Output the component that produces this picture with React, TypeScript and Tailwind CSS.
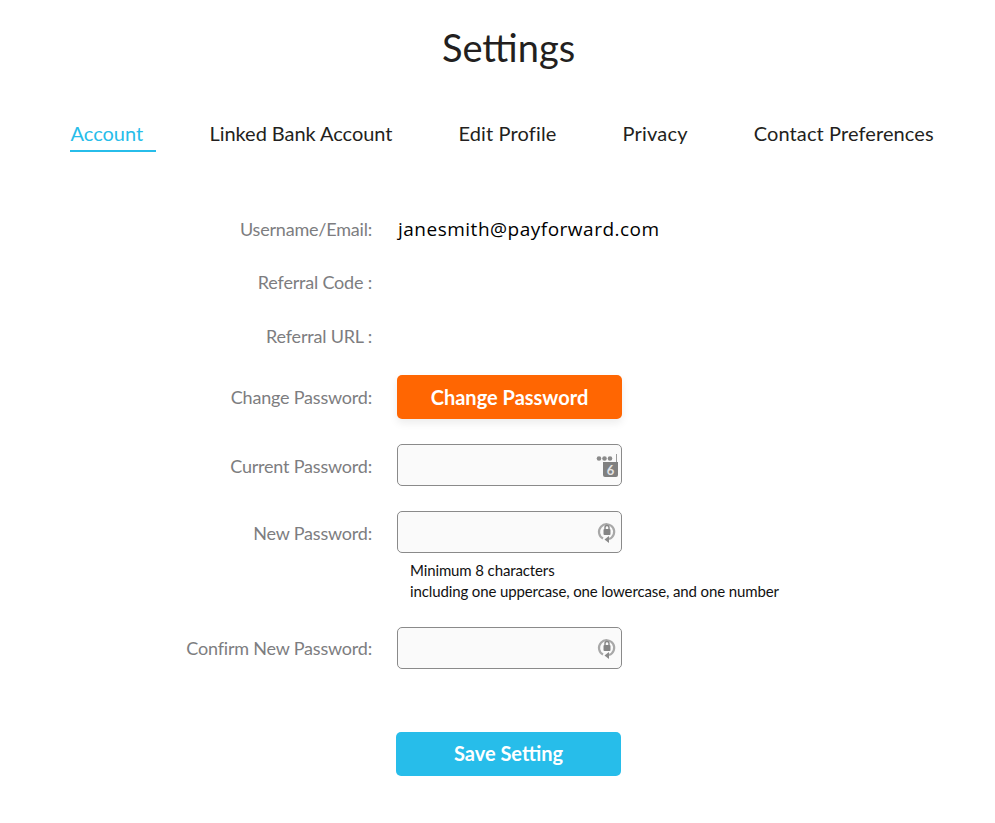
import React from "react";

function DotsIcon() {
  return (
    <svg width="24" height="26" viewBox="0 0 24 26" className="absolute right-[1px] top-[8px]">
      <circle cx="3" cy="5.5" r="2.3" fill="#8a8a8a" />
      <circle cx="8.5" cy="5.5" r="2.3" fill="#8a8a8a" />
      <circle cx="14" cy="5.5" r="2.3" fill="#8a8a8a" />
      <rect x="20" y="1" width="1" height="8" fill="#999" />
      <path d="M7 9h15v13a2 2 0 0 1-2 2H9a2 2 0 0 1-2-2z" fill="#808080" />
      <text x="14.5" y="21.5" textAnchor="middle" fontSize="13" fontWeight="700" fill="#e4e4e4" fontFamily="Lato, sans-serif">6</text>
    </svg>
  );
}

function LockIcon() {
  return (
    <svg width="20" height="24" viewBox="0 0 20 24" className="absolute right-[4px] top-[8px]">
      <path d="M6 18.5A7.6 7.6 0 1 1 12 19" fill="none" stroke="#a8a8a8" strokeWidth="2.2" />
      <path d="M12 16v7l-4.5-3.5z" fill="#8a8a8a" />
      <rect x="6.5" y="9" width="7" height="6" rx="1" fill="#858585" />
      <path d="M8 9V7.5a2 2 0 0 1 4 0V9" fill="none" stroke="#858585" strokeWidth="1.4" />
    </svg>
  );
}

function Row({ label, className, labelClass = "", children }: { label: string; className: string; labelClass?: string; children?: React.ReactNode }) {
  return (
    <div className={`flex items-center ${className}`}>
      <div className={`w-[372px] text-right text-[18px] leading-[24px] text-[#7d7d80] shrink-0 tracking-[-0.2px] ${labelClass}`}>{label}</div>
      <div className="ml-[25px]">{children}</div>
    </div>
  );
}

function Input({ icon }: { icon: React.ReactNode }) {
  return (
    <div className="relative w-[225px] h-[42px] bg-[#fafafa] border border-[#8a8a8a] rounded-[5px]">{icon}</div>
  );
}

const tabs = [
  { label: "Linked Bank Account", cls: "ml-[53.5px] pt-[1px] tracking-[-0.05px]" },
  { label: "Edit Profile", cls: "ml-[66px] pt-[1px] tracking-[0.15px]" },
  { label: "Privacy", cls: "ml-[66px] pt-[1px] tracking-[0.2px]" },
  { label: "Contact Preferences", cls: "ml-[66px] pt-[1px] tracking-[0.1px]" },
];

export default function App() {
  return (
    <div className="w-[995px] h-[823px] bg-white overflow-hidden font-['Lato',sans-serif] text-[#231f20]">
      <h1 className="pt-[23px] text-center text-[38px] leading-[48px] ml-[22px]">Settings</h1>
      <nav className="flex mt-[49px] ml-[70px] h-[32px] text-[20px] leading-[24px]">
        <div className="w-[86px] h-[32px] pl-[0.5px] pt-[1px] text-[#27bdea] border-b-2 border-[#27bdea]">Account</div>
        {tabs.map((t) => (
          <div key={t.label} className={t.cls}>{t.label}</div>
        ))}
      </nav>
      <Row label="Username/Email:" className="mt-[62px] h-[30px]">
        <span className="pl-[1px] font-['Open_Sans',sans-serif] text-[19px] leading-[26px] text-black tracking-[0.5px]">janesmith@payforward.com</span>
      </Row>
      <Row label="Referral Code :" className="mt-[23px] h-[30px]" />
      <Row label="Referral URL :" className="mt-[24px] h-[30px]" />
      <Row label="Change Password:" className="mt-[24px] h-[44px]">
        <div className="flex items-center justify-center w-[225px] h-[44px] rounded-[5px] bg-[#ff6602] text-white text-[20px] font-bold shadow-[0_4px_8px_rgba(0,0,0,0.08)]">Change Password</div>
      </Row>
      <Row label="Current Password:" labelClass="pt-[2px]" className="mt-[25px] h-[42px]">
        <Input icon={<DotsIcon />} />
      </Row>
      <Row label="New Password:" labelClass="pt-[2px]" className="mt-[25px] h-[42px]">
        <Input icon={<LockIcon />} />
      </Row>
      <div className="ml-[410px] mt-[7px] text-[15px] leading-[21px] tracking-[-0.12px] text-[#111]">
        <div>Minimum 8 characters</div>
        <div>including one uppercase, one lowercase, and one number</div>
      </div>
      <Row label="Confirm New Password:" className="mt-[25px] h-[42px]">
        <Input icon={<LockIcon />} />
      </Row>
      <div className="flex items-center justify-center ml-[396px] mt-[63px] w-[225px] h-[44px] pb-[2px] rounded-[5px] bg-[#27bdea] text-white text-[20px] font-bold">Save Setting</div>
    </div>
  );
}
